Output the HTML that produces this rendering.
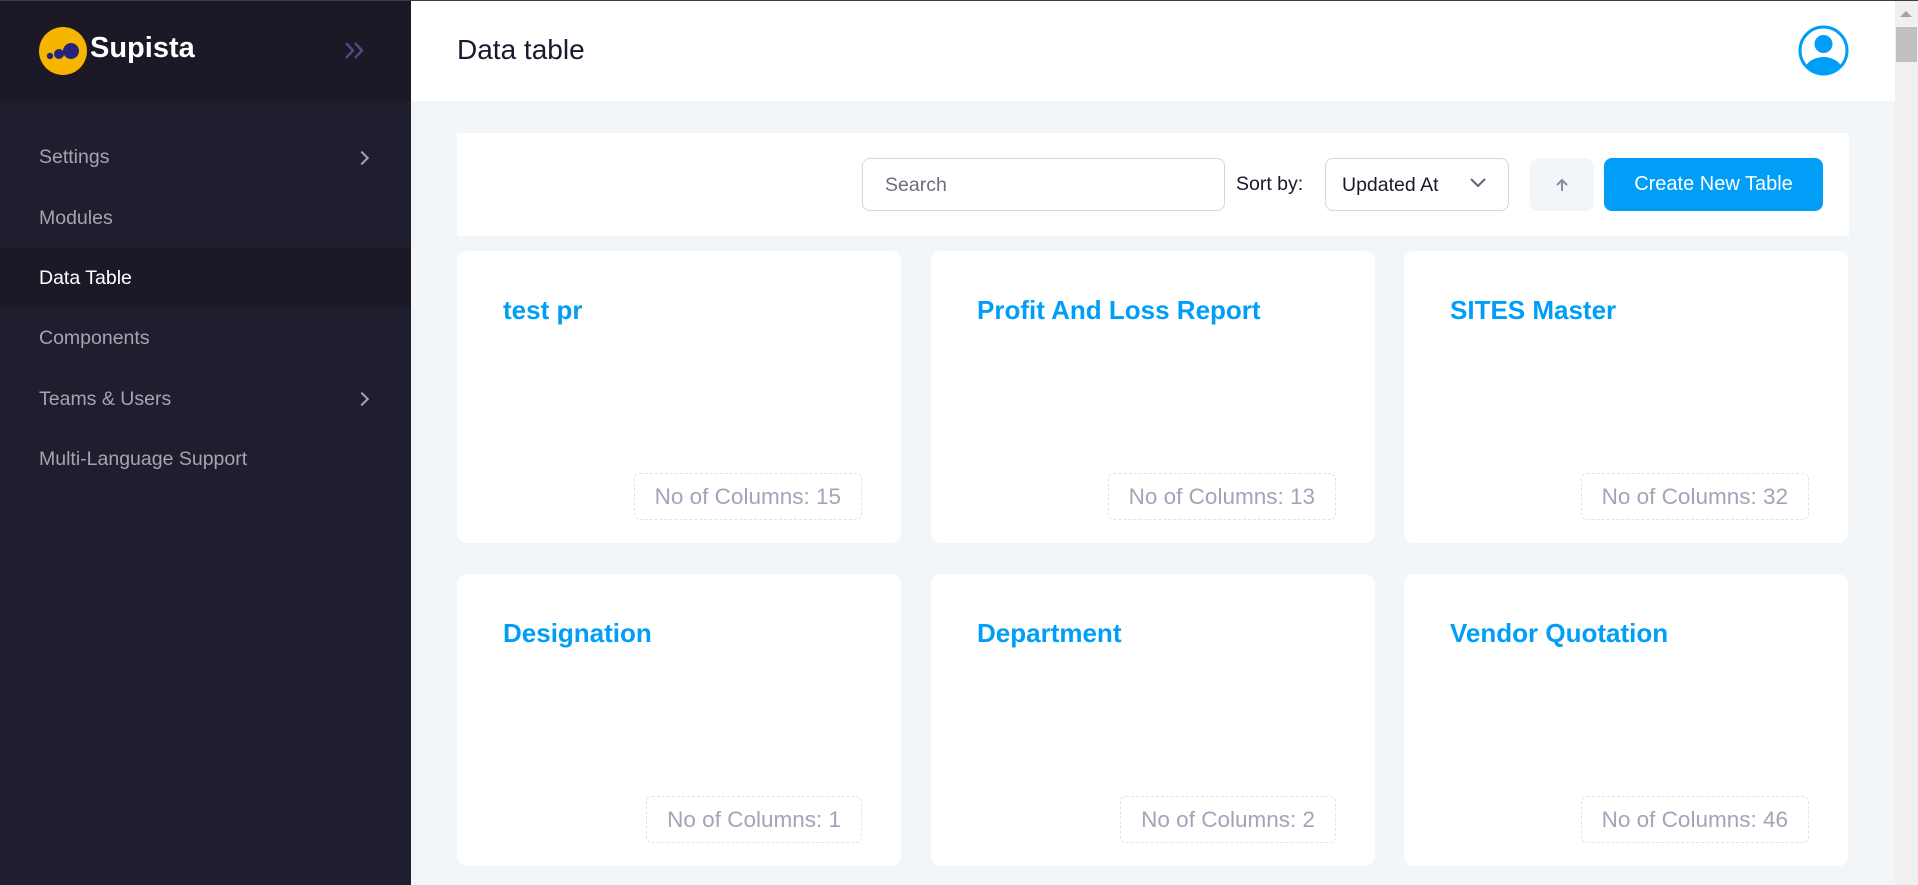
<!DOCTYPE html>
<html><head><meta charset="utf-8"><style>
*{box-sizing:border-box;margin:0;padding:0}
body{width:1918px;height:885px;overflow:hidden;background:#f3f6f9;font-family:"Liberation Sans",sans-serif;position:relative}
.topline{position:absolute;left:0;top:0;width:1918px;height:1px;background:#3a3d42;z-index:5}
.sb{position:absolute;left:0;top:0;width:411px;height:885px;background:#1f1e2e}
.sbh{position:absolute;left:0;top:0;width:411px;height:101px;background:#1a1925}
.logo{position:absolute;left:39px;top:27px;width:48px;height:48px;border-radius:50%;background:#f8b500}
.brand{position:absolute;left:90px;top:32px;color:#fff;font-weight:bold;font-size:29px}
.mi{position:absolute;left:39px;color:#a5a4b3;font-size:19.5px}
.act{position:absolute;left:0;top:248px;width:411px;height:59px;background:#1a1925}
.chev{position:absolute;left:357px;width:10px;height:10px;border-right:2px solid #a5a4b3;border-top:2px solid #a5a4b3;transform:rotate(45deg)}
.hdr{position:absolute;left:411px;top:0;width:1484px;height:101px;background:#fff}
.title{position:absolute;left:457px;top:34px;font-size:28px;color:#161a2b}
.scroll{position:absolute;left:1895px;top:0;width:23px;height:885px;background:#f0f0f0}
.tb{position:absolute;left:457px;top:133px;width:1392px;height:103px;background:#fff}
.inp{position:absolute;border:1px solid #d6d6dd;border-radius:8px;background:#fff;font-size:19.5px;color:#6b6f7a}
.card{position:absolute;background:#fff;border-radius:10px;width:444px;height:292px}
.card h3{position:absolute;left:46px;top:44px;color:#009ef7;font-size:26px;font-weight:bold}
.badge{position:absolute;right:39px;bottom:23px;height:47px;border:1px dashed #e1e3ea;border-radius:6px;color:#a1a5b7;font-size:22.5px;line-height:45px;padding:0 20px}
</style></head><body>
<div class="topline"></div>
<div class="sb"></div><div class="sbh"></div>
<div class="logo"><svg width="48" height="48"><circle cx="32" cy="24" r="8" fill="#27247a"/><circle cx="20" cy="27" r="5" fill="#27247a"/><circle cx="11" cy="29" r="3.2" fill="#27247a"/></svg></div>
<div class="brand">Supista</div>
<svg style="position:absolute;left:344px;top:42px" width="22" height="17"><path d="M2 1l7 7.5-7 7.5M11 1l7 7.5-7 7.5" stroke="#4a4a85" stroke-width="2.5" fill="none"/></svg>
<div class="act"></div>
<div class="mi" style="top:146px">Settings</div><div class="chev" style="top:153px"></div>
<div class="mi" style="top:207px">Modules</div>
<div class="mi" style="top:267px;color:#fff">Data Table</div>
<div class="mi" style="top:327px">Components</div>
<div class="mi" style="top:388px">Teams &amp; Users</div><div class="chev" style="top:394px"></div>
<div class="mi" style="top:448px">Multi-Language Support</div>
<div class="hdr"></div>
<div class="title">Data table</div>
<svg style="position:absolute;left:1798px;top:25px" width="51" height="51" viewBox="0 0 51 51"><defs><clipPath id="c"><circle cx="25.5" cy="25.5" r="23"/></clipPath></defs><circle cx="25.5" cy="25.5" r="23.5" fill="none" stroke="#009ef7" stroke-width="3"/><circle cx="25.5" cy="19" r="9" fill="#009ef7"/><ellipse cx="25.5" cy="46" rx="19" ry="14" fill="#009ef7" clip-path="url(#c)"/></svg>
<div class="scroll"><div style="position:absolute;left:1px;top:27px;width:21px;height:35px;background:#c0c0c0"></div><div style="position:absolute;left:5px;top:11px;border-left:6px solid transparent;border-right:6px solid transparent;border-bottom:6px solid #a3a3a3"></div></div>
<div class="tb"></div>
<div class="inp" style="left:862px;top:158px;width:363px;height:53px;padding:15px 0 0 22px">Search</div>
<div style="position:absolute;left:1236px;top:173px;font-size:19.5px;color:#161a2b">Sort by:</div>
<div class="inp" style="left:1325px;top:158px;width:184px;height:53px;padding:15px 0 0 16px;color:#161a2b">Updated At</div>
<svg style="position:absolute;left:1470px;top:178px" width="16" height="10"><path d="M1 1l7 7 7-7" stroke="#5e6278" stroke-width="2" fill="none"/></svg>
<div style="position:absolute;left:1530px;top:158px;width:64px;height:53px;background:#f3f6f9;border-radius:8px"></div>
<svg style="position:absolute;left:1554px;top:177px" width="16" height="16"><path d="M8 14V3M3 8l5-5 5 5" stroke="#8a8ca3" stroke-width="2" fill="none"/></svg>
<div style="position:absolute;left:1604px;top:158px;width:219px;height:53px;background:#009ef7;border-radius:8px;color:#fff;font-size:20px;text-align:center;line-height:53px">Create New Table</div>
<div class="card" style="left:457px;top:251px"><h3>test pr</h3><div class="badge">No of Columns: 15</div></div>
<div class="card" style="left:931px;top:251px"><h3>Profit And Loss Report</h3><div class="badge">No of Columns: 13</div></div>
<div class="card" style="left:1404px;top:251px"><h3>SITES Master</h3><div class="badge">No of Columns: 32</div></div>
<div class="card" style="left:457px;top:574px"><h3>Designation</h3><div class="badge">No of Columns: 1</div></div>
<div class="card" style="left:931px;top:574px"><h3>Department</h3><div class="badge">No of Columns: 2</div></div>
<div class="card" style="left:1404px;top:574px"><h3>Vendor Quotation</h3><div class="badge">No of Columns: 46</div></div>
</body></html>
